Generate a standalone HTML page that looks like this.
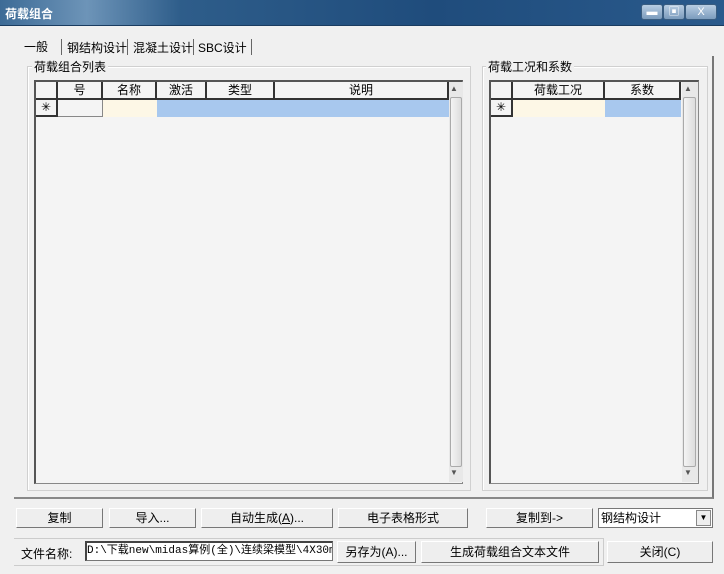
<!DOCTYPE html><html><head><meta charset="utf-8"><style>
*{box-sizing:border-box;margin:0;padding:0}
body{width:724px;height:574px;background:#f0f0f0;position:relative;overflow:hidden;font-family:"Liberation Sans","Noto Sans CJK SC",sans-serif;font-size:12px;color:#000}
.a{position:absolute}
.title{left:0;top:0;width:724px;height:26px;background:linear-gradient(90deg,#3d6b96 0%,#6d94b8 12%,#2e5d8a 25%,#1f4c7c 60%,#2a5a8c 100%);border-bottom:1px solid #1a3c60}
.title span{position:absolute;left:5px;top:5px;color:#fff;font-size:12px;font-weight:bold}
.wb{top:4px;height:16px;border:1px solid #3a5d80;border-radius:3px;background:linear-gradient(#b8cde2,#7c9cbd);color:#fff;font-size:11px;text-align:center;line-height:14px}
.btn{background:#eee;border-right:1px solid #777;border-bottom:1px solid #777;border-top:1px solid #fff;border-left:1px solid #fff;text-align:center;line-height:18px;font-size:12px}
.grp{border:1px solid #d0d0d0;box-shadow:inset 1px 1px 0 #fff}
.lbl{background:#f0f0f0;padding:0 2px;font-size:12px}
.grid{background:#f4f4f4;border:1px solid #888;border-top:2px solid #555;border-left:2px solid #555}
.hc{top:0;height:18px;border-right:2px solid #333;border-bottom:2px solid #333;text-align:center;line-height:16px;background:#f4f4f4}
.sb{background:#e8e8e8}
.thumb{background:linear-gradient(90deg,#f4f4f4,#ddd);border:1px solid #aaa;border-radius:2px}
</style></head><body>
<div class="a title"><span>荷载组合</span></div>
<div class="a wb" style="left:641px;width:22px">▬</div>
<div class="a wb" style="left:663px;width:22px">▣</div>
<div class="a wb" style="left:685px;width:32px">X</div>

<div class="a" style="left:24px;top:38px">一般</div>
<div class="a" style="left:61px;top:39px;border-left:1px solid #666;padding-left:5px;height:16px">钢结构设计</div>
<div class="a" style="left:127px;top:39px;border-left:1px solid #666;padding-left:5px;height:16px">混凝土设计</div>
<div class="a" style="left:193px;top:39px;border-left:1px solid #666;padding-left:4px;height:16px;border-right:1px solid #666;padding-right:4px">SBC设计</div>
<div class="a" style="left:14px;top:56px;width:700px;height:443px;border-right:2px solid #777;border-bottom:2px solid #888"></div>

<div class="a grp" style="left:27px;top:66px;width:444px;height:425px"></div>
<div class="a lbl" style="left:32px;top:58px">荷载组合列表</div>
<div class="a grid" style="left:34px;top:80px;width:429px;height:404px">
 <div class="a hc" style="left:0;width:22px"></div>
 <div class="a hc" style="left:22px;width:45px">号</div>
 <div class="a hc" style="left:67px;width:54px">名称</div>
 <div class="a hc" style="left:121px;width:50px">激活</div>
 <div class="a hc" style="left:171px;width:68px">类型</div>
 <div class="a hc" style="left:239px;width:174px">说明</div>
 <div class="a" style="left:0;top:18px;width:22px;height:17px;border-right:2px solid #333;border-bottom:2px solid #333;text-align:center;line-height:15px">✳</div>
 <div class="a" style="left:22px;top:18px;width:45px;height:17px;border-right:1px solid #888;border-bottom:1px solid #888;background:#f4f4f4"></div>
 <div class="a" style="left:67px;top:18px;width:54px;height:17px;background:#fdf7e6"></div>
 <div class="a" style="left:121px;top:18px;width:292px;height:17px;background:#a8c8ee"></div>
 <div class="a sb" style="left:413px;top:0;width:14px;height:400px"></div>
 <div class="a" style="left:414px;top:2px;font-size:8px;color:#555">▲</div>
 <div class="a thumb" style="left:414px;top:15px;width:12px;height:370px"></div>
 <div class="a" style="left:414px;top:386px;font-size:8px;color:#555">▼</div>
</div>

<div class="a grp" style="left:482px;top:66px;width:226px;height:425px"></div>
<div class="a lbl" style="left:486px;top:58px">荷载工况和系数</div>
<div class="a grid" style="left:489px;top:80px;width:210px;height:404px">
 <div class="a hc" style="left:0;width:22px"></div>
 <div class="a hc" style="left:22px;width:92px">荷载工况</div>
 <div class="a hc" style="left:114px;width:76px">系数</div>
 <div class="a" style="left:0;top:18px;width:22px;height:17px;border-right:2px solid #333;border-bottom:2px solid #333;text-align:center;line-height:15px">✳</div>
 <div class="a" style="left:22px;top:18px;width:92px;height:17px;background:#fdf7e6"></div>
 <div class="a" style="left:114px;top:18px;width:76px;height:17px;background:#a8c8ee"></div>
 <div class="a sb" style="left:191px;top:0;width:16px;height:400px"></div>
 <div class="a" style="left:193px;top:2px;font-size:8px;color:#555">▲</div>
 <div class="a thumb" style="left:192px;top:15px;width:13px;height:370px"></div>
 <div class="a" style="left:193px;top:386px;font-size:8px;color:#555">▼</div>
</div>

<div class="a btn" style="left:16px;top:508px;width:87px;height:20px">复制</div>
<div class="a btn" style="left:109px;top:508px;width:87px;height:20px">导入...</div>
<div class="a btn" style="left:201px;top:508px;width:132px;height:20px">自动生成(<u>A</u>)...</div>
<div class="a btn" style="left:338px;top:508px;width:130px;height:20px">电子表格形式</div>
<div class="a btn" style="left:486px;top:508px;width:107px;height:20px">复制到-&gt;</div>
<div class="a" style="left:598px;top:508px;width:115px;height:20px;background:#fff;border:1px solid #777;line-height:18px;padding-left:2px">钢结构设计<span class="a" style="right:1px;top:1px;width:15px;height:16px;background:#eee;border:1px solid #888;font-size:8px;text-align:center;line-height:14px">▼</span></div>

<div class="a" style="left:14px;top:538px;width:590px;height:28px;border:1px solid #ccc;border-left:none"></div>
<div class="a" style="left:21px;top:545px">文件名称:</div>
<div class="a" style="left:85px;top:541px;width:248px;height:20px;background:#fff;border:1px solid #777;border-top:2px solid #444;border-left:2px solid #444;font-family:'Liberation Mono','Noto Sans CJK SC',monospace;font-size:11px;line-height:16px;white-space:nowrap;overflow:hidden">D:\下载new\midas算例(全)\连续梁模型\4X30m(</div>
<div class="a btn" style="left:337px;top:541px;width:79px;height:22px;line-height:20px">另存为(A)...</div>
<div class="a btn" style="left:421px;top:541px;width:178px;height:22px;line-height:20px">生成荷载组合文本文件</div>
<div class="a btn" style="left:607px;top:541px;width:106px;height:22px;line-height:20px">关闭(C)</div>
</body></html>
